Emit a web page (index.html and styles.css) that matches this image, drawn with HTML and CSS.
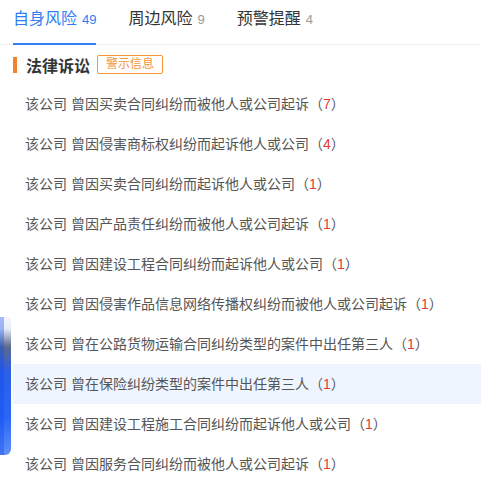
FILE: index.html
```html
<!DOCTYPE html>
<html lang="zh-CN">
<head>
    <meta charset="UTF-8">
    <meta name="viewport" content="width=device-width, initial-scale=1.0">
    <title>风险信息</title>
    <link rel="stylesheet" href="styles.css">
</head>
<body>

    <div class="tabs">
        <div class="tab active">自身风险<span class="count">49</span></div>
        <div class="tab">周边风险<span class="count">9</span></div>
        <div class="tab">预警提醒<span class="count">4</span></div>
    </div>

    <div class="section-title">
        <span class="bar"></span>
        <h3>法律诉讼</h3>
        <span class="badge">警示信息</span>
    </div>

    <ul class="risk-list">
        <li>该公司 曾因买卖合同纠纷而被他人或公司起诉（<em>7</em>）</li>
        <li>该公司 曾因侵害商标权纠纷而起诉他人或公司（<em>4</em>）</li>
        <li>该公司 曾因买卖合同纠纷而起诉他人或公司（<em>1</em>）</li>
        <li>该公司 曾因产品责任纠纷而被他人或公司起诉（<em>1</em>）</li>
        <li>该公司 曾因建设工程合同纠纷而起诉他人或公司（<em>1</em>）</li>
        <li>该公司 曾因侵害作品信息网络传播权纠纷而被他人或公司起诉（<em>1</em>）</li>
        <li>该公司 曾在公路货物运输合同纠纷类型的案件中出任第三人（<em>1</em>）</li>
        <li class="hover">该公司 曾在保险纠纷类型的案件中出任第三人（<em>1</em>）</li>
        <li>该公司 曾因建设工程施工合同纠纷而起诉他人或公司（<em>1</em>）</li>
        <li>该公司 曾因服务合同纠纷而被他人或公司起诉（<em>1</em>）</li>
    </ul>

    <div class="side-float"></div>

</body>
</html>
```

FILE: styles.css
```css
* {
    margin: 0;
    padding: 0;
    box-sizing: border-box;
    font-family: 'Liberation Sans', 'Noto Sans CJK SC', sans-serif;
}
body {
    background: #fff;
    color: #333;
    overflow: hidden;
}
.tabs {
    display: flex;
    gap: 32px;
    height: 45px;
    padding: 0 13px;
    border-bottom: 1px solid #eeeeee;
}
.tab {
    height: 45px;
    padding-top: 9px;
    font-size: 16px;
    line-height: 20px;
    color: #333;
    cursor: pointer;
}
.tab .count {
    margin-left: 5px;
    font-size: 13px;
    color: #999;
}
.tab.active {
    color: #2f7ef5;
    border-bottom: 2px solid #2f7ef5;
}
.tab.active .count {
    color: #2f7ef5;
}
.section-title {
    display: flex;
    align-items: center;
    height: 19px;
    margin-top: 10px;
    padding-left: 13px;
}
.section-title .bar {
    width: 4px;
    height: 16px;
    background: #f0832e;
    margin-right: 9px;
}
.section-title h3 {
    font-size: 16px;
    font-weight: bold;
    color: #333;
}
.badge {
    margin-left: 7px;
    height: 19px;
    line-height: 17px;
    padding: 0 8px;
    font-size: 12px;
    color: #f29636;
    border: 1px solid #f29636;
    border-radius: 2px;
}
.risk-list {
    list-style: none;
    margin-top: 10px;
    margin-left: 13px;
}
.risk-list li {
    height: 40px;
    line-height: 40px;
    padding-left: 12px;
    font-size: 14px;
    color: #555;
    white-space: nowrap;
}
.risk-list li.hover {
    background: #eef5ff;
}
.risk-list em {
    font-style: normal;
    color: #e53935;
}
.side-float {
    position: absolute;
    left: 0;
    top: 317px;
    width: 11px;
    height: 138px;
    border-bottom-right-radius: 6px;
    background:
        linear-gradient(to right, rgba(10, 70, 240, 0.35) 0, rgba(10, 70, 240, 0.35) 4px, rgba(255, 255, 255, 0) 4px),
        linear-gradient(to bottom, #f6f8fe 0, #e4eaf8 12px, #5b6a8c 30px, #2c5fe8 55px, #2a66f6 100px, #5f8ff8 138px);
}
```
